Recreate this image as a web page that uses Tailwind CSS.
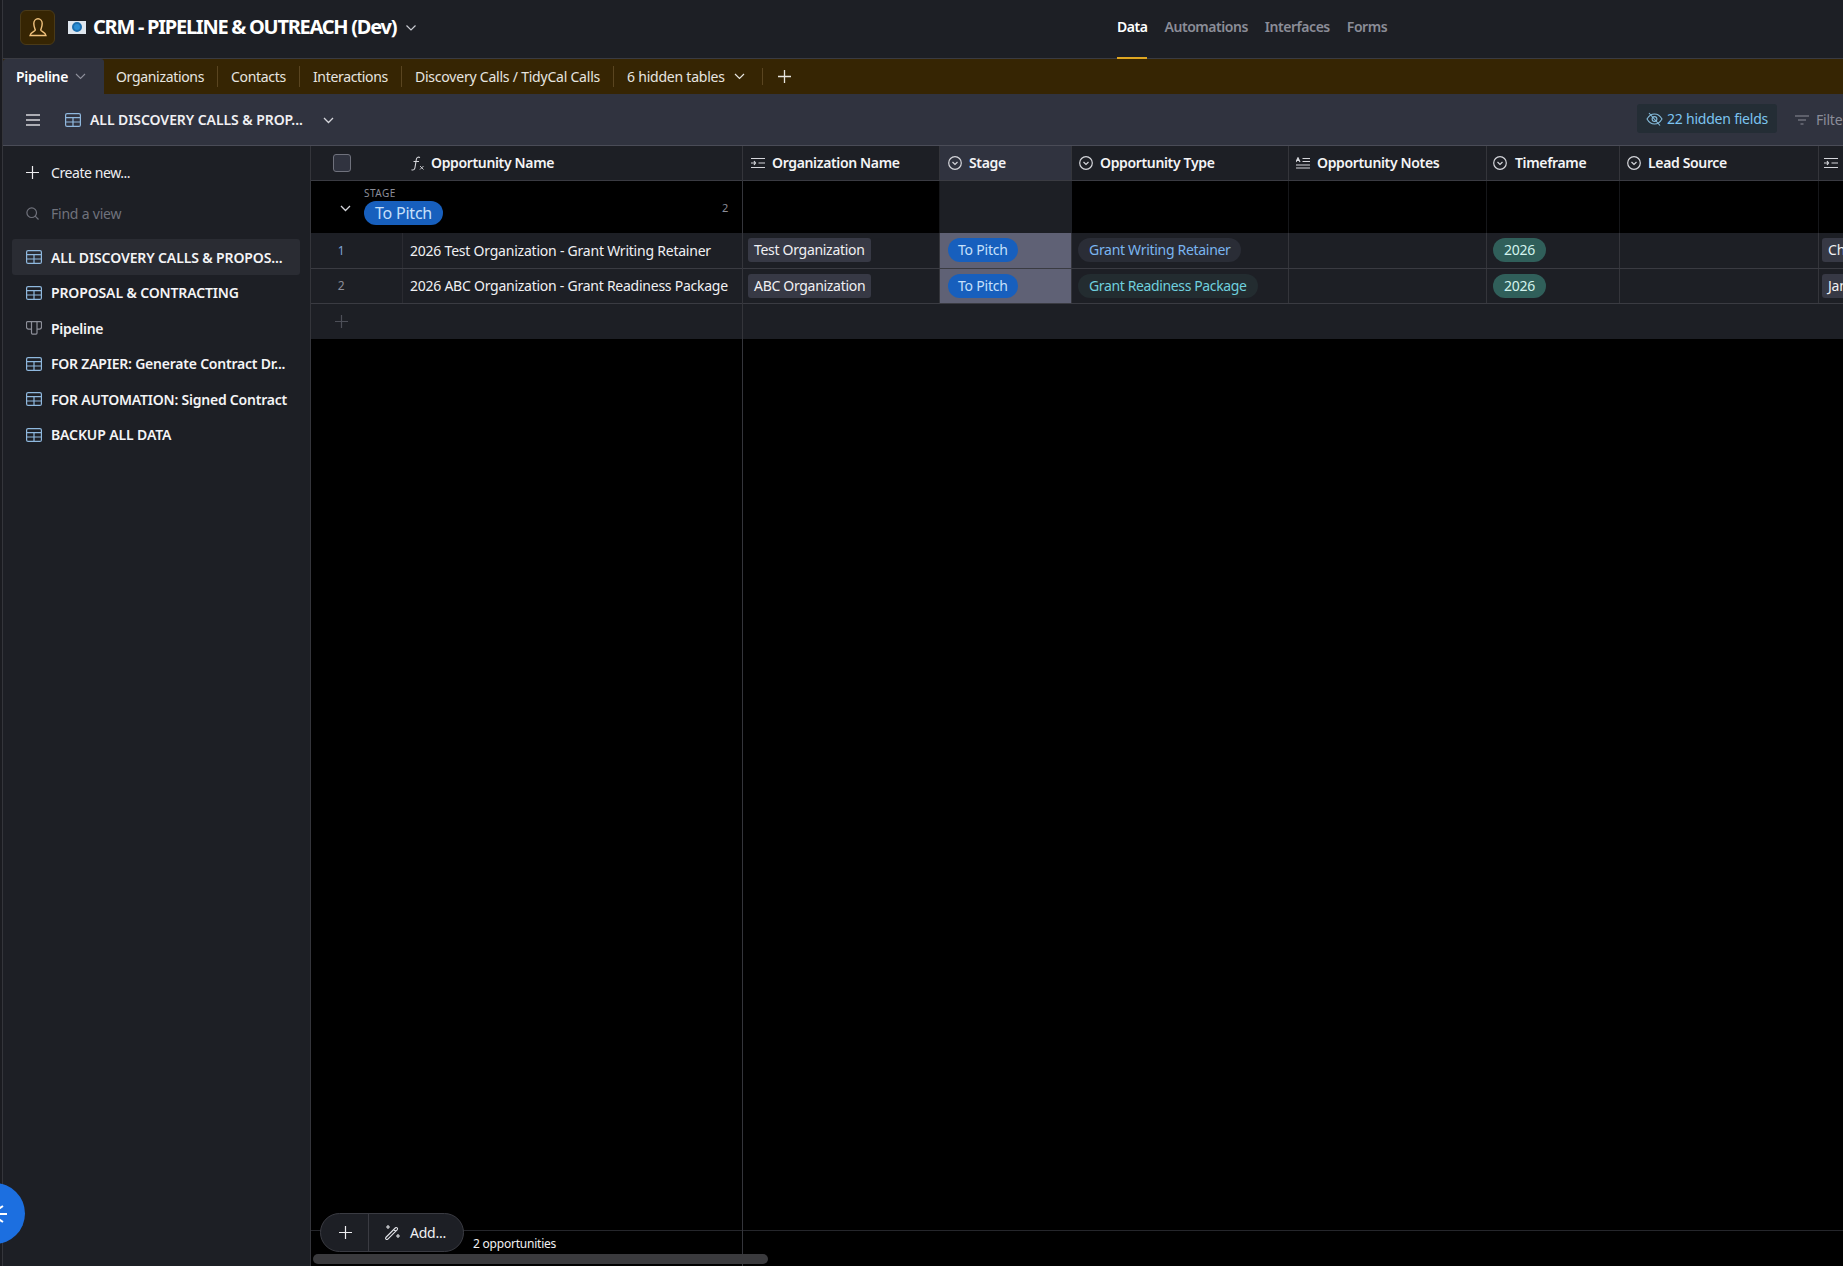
<!DOCTYPE html>
<html><head><meta charset="utf-8"><title>CRM</title>
<script src="https://cdn.jsdelivr.net/npm/@tailwindcss/browser@4"></script></head>
<body class="bg-black">
<div class="relative w-[1843px] h-[1266px] overflow-hidden flex flex-col bg-black text-white font-['Noto_Sans',sans-serif] text-[14px] tracking-[-0.22px]">

<!-- top bar -->
<header class="h-[59px] shrink-0 bg-[#1d1f25] border-b border-[#3a3b42] pl-[3px] flex items-center relative">
  <div class="ml-[17px] w-[35px] h-[35px] rounded-[6px] bg-[#362503] border border-[#4a3a18] flex items-center justify-center -mt-[3px]">
    <svg width="20" height="22" viewBox="0 0 20 22" fill="none" stroke="#f1c27d" stroke-width="1.4"><path d="M5.800 6.500a4.200 4.800 0 0 1 8.400 0c0 3-1.200 5-1.500 6.500 0 1.500 5 2.200 5.300 5.500H2c.3-3.300 5.300-4 5.300-5.500C7 11.500 5.800 9.500 5.800 6.500z"/></svg>
  </div>
  <div class="ml-[13px] w-[18px] h-[13px] bg-[#dfe6ee] flex items-center justify-center -mt-[4px]"><div class="w-[10px] h-[10px] rounded-full bg-[#2b8fd6] border-2 border-[#1b6fb0]"></div></div>
  <h1 class="ml-[7px] text-[20px] font-bold tracking-[-1.25px] -mt-[4px] whitespace-nowrap">CRM - PIPELINE &amp; OUTREACH (Dev)</h1>
  <svg class="ml-[9px] -mt-[3px]" width="12" height="8" viewBox="0 0 12 8" fill="none" stroke="#c9cbd2" stroke-width="1.2"><path d="M1.500 1.500 6 6l4.500-4.500"/></svg>
  <nav class="absolute left-[1117px] top-0 h-[59px] flex gap-[17px] text-[14px] font-semibold text-[#8b8d98] tracking-[-0.46px]">
    <a class="h-[59px] pt-[16px] border-b-2 border-[#dfa622] text-white">Data</a>
    <a class="pt-[16px]">Automations</a>
    <a class="pt-[16px]">Interfaces</a>
    <a class="pt-[16px]">Forms</a>
  </nav>
</header>

<!-- table tabs -->
<div class="h-[35px] shrink-0 bg-[#362503] flex items-center text-[14px] text-[#e8e6e0] whitespace-nowrap pl-[3px] tracking-[-0.32px]">
  <div class="h-full w-[101px] rounded-t-[3px] bg-[#30333f] flex items-center pl-[13px] font-semibold text-white">Pipeline
    <svg class="ml-[7px]" width="11" height="7" viewBox="0 0 11 7" fill="none" stroke="#8f919c" stroke-width="1.100"><path d="M1 1l4.500 4.500L10 1"/></svg></div>
  <span class="pl-[12px] pr-[13px] border-r border-[#5a4520]">Organizations</span>
  <span class="pl-[13px] pr-[13px] border-r border-[#5a4520]">Contacts</span>
  <span class="pl-[13px] pr-[13px] border-r border-[#5a4520]">Interactions</span>
  <span class="pl-[13px] pr-[13px] border-r border-[#5a4520] tracking-[-0.22px]">Discovery Calls / TidyCal Calls</span>
  <span class="pl-[13px] flex items-center tracking-[-0.22px]">6 hidden tables
    <svg class="ml-[9px]" width="11" height="7" viewBox="0 0 11 7" fill="none" stroke="#e8e6e0" stroke-width="1.200"><path d="M1 1l4.500 4.500L10 1"/></svg></span>
  <span class="ml-[17px] h-[17px] border-r border-[#5a4520]"></span>
  <svg class="ml-[15px]" width="13" height="13" viewBox="0 0 13 13" stroke="#e8e6e0" stroke-width="1.300"><path d="M6.500 0v13M0 6.500h13"/></svg>
</div>

<!-- view bar -->
<div class="h-[52px] shrink-0 bg-[#30333f] border-b border-[#4a4c57] flex items-center pl-[26px] relative whitespace-nowrap">
  <svg width="14" height="12" viewBox="0 0 14 12" stroke="#d5d6db" stroke-width="1.300"><path d="M0 1h14M0 6h14M0 11h14"/></svg>
  <svg class="ml-[25px]" width="16" height="14" viewBox="0 0 16 14" fill="none" stroke="#8fb8de" stroke-width="1.200"><rect x=".6" y=".6" width="14.800" height="12.800" rx="1.500"/><path d="M.6 4.700h14.800M.6 9h14.800M8 4.700v8.700"/></svg>
  <span class="ml-[9px] -mt-[1px] font-semibold text-[#f0f0f3] tracking-[-0.07px]">ALL DISCOVERY CALLS &amp; PROP...</span>
  <svg class="ml-[20px] mt-[2px]" width="11" height="7" viewBox="0 0 11 7" fill="none" stroke="#d5d6db" stroke-width="1.300"><path d="M1 1l4.500 4.500L10 1"/></svg>
  <div class="absolute left-[1637px] top-[10px] w-[140px] h-[29px] rounded-[3px] bg-[#242d35] flex items-center pl-[9px] text-[#7cc4f0]">
    <svg width="17" height="14" viewBox="0 0 17 14" fill="none" stroke="#86bcdc" stroke-width="1.100"><path d="M1 7c2-3.500 4.500-5 7.500-5s5.500 1.500 7.500 5c-2 3.500-4.500 5-7.500 5S3 10.500 1 7z"/><circle cx="8.500" cy="7" r="2.400"/><path d="M3 1l11 12.500"/></svg>
    <span class="ml-[4px]">22 hidden fields</span>
  </div>
  <div class="absolute left-[1795px] top-[15px] flex items-center text-[#8b8d98]">
    <svg width="14" height="10" viewBox="0 0 14 10" stroke="#8b8d98" stroke-width="1.200"><path d="M0 1h14M3 5h8M5.500 9h3"/></svg>
    <span class="ml-[7px]">Filter</span>
  </div>
</div>

<!-- main -->
<div class="flex-1 min-h-0 flex pl-[3px]">
  <!-- sidebar -->
  <aside class="w-[307px] shrink-0 bg-[#1d1f25] flex flex-col pl-[9px] pr-[10px] text-[14px]">
    <div class="h-[34px] mt-[9px] flex items-center pl-[14px] text-[#eeeef1]">
      <svg width="13" height="13" viewBox="0 0 13 13" stroke="#eeeef1" stroke-width="1.200"><path d="M6.500 0v13M0 6.500h13"/></svg>
      <span class="ml-[12px] tracking-[-0.42px]">Create new...</span>
    </div>
    <div class="h-[34px] mt-[7px] flex items-center pl-[14px] text-[#70727c]">
      <svg width="13" height="13" viewBox="0 0 13 13" fill="none" stroke="#70727c" stroke-width="1.200"><circle cx="5.700" cy="5.700" r="4.800"/><path d="M9.200 9.200l3.300 3.300"/></svg>
      <span class="ml-[12px]">Find a view</span>
    </div>
    <ul class="mt-[9px] font-semibold text-[#f4f4f6] whitespace-nowrap">
      <li class="h-[36px] rounded-[3px] bg-[#2a2c33] flex items-center pl-[14px]">
        <svg width="16" height="14" viewBox="0 0 16 14" fill="none" stroke="#8fb8de" stroke-width="1.200"><rect x=".6" y=".6" width="14.800" height="12.800" rx="1.500"/><path d="M.6 4.700h14.800M.6 9h14.800M8 4.700v8.700"/></svg>
        <span class="ml-[9px] tracking-[-0.12px]">ALL DISCOVERY CALLS &amp; PROPOS...</span></li>
      <li class="h-[35px] flex items-center pl-[14px]">
        <svg width="16" height="14" viewBox="0 0 16 14" fill="none" stroke="#8fb8de" stroke-width="1.200"><rect x=".6" y=".6" width="14.800" height="12.800" rx="1.500"/><path d="M.6 4.700h14.800M.6 9h14.800M8 4.700v8.700"/></svg>
        <span class="ml-[9px] tracking-[-0.14px]">PROPOSAL &amp; CONTRACTING</span></li>
      <li class="h-[36px] flex items-center pl-[14px]">
        <svg width="16" height="14" viewBox="0 0 16 14" fill="none" stroke="#8d8f99" stroke-width="1.200"><path d="M1.500.6h13a1 1 0 0 1 1 1v4.500a2 2 0 0 1-2 2H11v4a1 1 0 0 1-1 1H6.500a1 1 0 0 1-1-1v-4H2.500a2 2 0 0 1-2-2V1.600a1 1 0 0 1 1-1zM5.500.6v7.500M11 .6v7.500"/></svg>
        <span class="ml-[9px] tracking-[-0.3px]">Pipeline</span></li>
      <li class="h-[35px] flex items-center pl-[14px]">
        <svg width="16" height="14" viewBox="0 0 16 14" fill="none" stroke="#8fb8de" stroke-width="1.200"><rect x=".6" y=".6" width="14.800" height="12.800" rx="1.500"/><path d="M.6 4.700h14.800M.6 9h14.800M8 4.700v8.700"/></svg>
        <span class="ml-[9px]">FOR ZAPIER: Generate Contract Dr...</span></li>
      <li class="h-[36px] flex items-center pl-[14px]">
        <svg width="16" height="14" viewBox="0 0 16 14" fill="none" stroke="#8fb8de" stroke-width="1.200"><rect x=".6" y=".6" width="14.800" height="12.800" rx="1.500"/><path d="M.6 4.700h14.800M.6 9h14.800M8 4.700v8.700"/></svg>
        <span class="ml-[9px]">FOR AUTOMATION: Signed Contract</span></li>
      <li class="h-[35px] flex items-center pl-[14px]">
        <svg width="16" height="14" viewBox="0 0 16 14" fill="none" stroke="#8fb8de" stroke-width="1.200"><rect x=".6" y=".6" width="14.800" height="12.800" rx="1.500"/><path d="M.6 4.700h14.800M.6 9h14.800M8 4.700v8.700"/></svg>
        <span class="ml-[9px] tracking-[-0.12px]">BACKUP ALL DATA</span></li>
    </ul>
  </aside>

  <!-- frozen pane -->
  <section class="w-[433px] shrink-0 border-l border-[#34353b] border-r flex flex-col whitespace-nowrap">
    <div class="h-[35px] shrink-0 bg-[#1d1f25] border-b border-[#3a3b42] flex items-center font-semibold">
      <span class="ml-[22px] w-[18px] h-[18px] rounded-[3px] bg-[#30333f] border border-[#6f717c]"></span>
      <svg class="ml-[60px]" width="14" height="15" viewBox="0 0 14 15" fill="none" stroke="#d5d6db" stroke-width="1.100"><path d="M9 1.500c-2-1-3.400 0-3.700 2L4 11.500c-.3 2-1.500 3-3.500 2.300M2.500 5.500h5.500"/><path stroke-width=".9" d="M9 10l3.500 3.500M12.500 10 9 13.500"/></svg>
      <span class="ml-[6px] -mt-[1px] text-[#f4f4f6] tracking-[-0.35px]">Opportunity Name</span>
    </div>
    <div class="h-[52px] shrink-0 bg-black relative">
      <svg class="absolute left-[29px] top-[24px]" width="11" height="7" viewBox="0 0 11 7" fill="none" stroke="#d5d6db" stroke-width="1.300"><path d="M1 1l4.500 4.500L10 1"/></svg>
      <span class="absolute left-[53px] top-[5px] text-[10px] tracking-[0.5px] leading-[14px] text-[#8b8d98]">STAGE</span>
      <span class="absolute left-[53px] top-[20px] h-[24px] px-[11px] rounded-full bg-[#175fbd] text-[#c6e0fb] text-[16px] leading-[24px]">To Pitch</span>
      <span class="absolute right-[14px] top-[19px] text-[11px] text-[#8b8d98]">2</span>
    </div>
    <div class="h-[36px] shrink-0 bg-[#1d1f25] border-b border-[#3a3b42] flex items-center">
      <span class="w-[92px] h-full shrink-0 border-r border-[#2a2b31] flex items-center justify-center pr-[31px] text-[12px] text-[#7fa4d8]">1</span>
      <span class="pl-[7px] text-[#f0f0f3]">2026 Test Organization - Grant Writing Retainer</span>
    </div>
    <div class="h-[35px] shrink-0 bg-[#1d1f25] border-b border-[#3a3b42] flex items-center">
      <span class="w-[92px] h-full shrink-0 border-r border-[#2a2b31] flex items-center justify-center pr-[31px] text-[12px] text-[#8b8d98]">2</span>
      <span class="pl-[7px] -mt-[1px] text-[#f0f0f3] tracking-[-0.25px]">2026 ABC Organization - Grant Readiness Package</span>
    </div>
    <div class="h-[35px] shrink-0 bg-[#1d1f25] flex items-center pl-[24px]">
      <svg width="13" height="13" viewBox="0 0 13 13" stroke="#4d4f58" stroke-width="1.200"><path d="M6.500 0v13M0 6.500h13"/></svg>
    </div>
    <div class="flex-1"></div>
    <div class="h-[36px] shrink-0 border-t border-[#25262b] relative">
      <span class="absolute left-[162px] top-[4px] text-[12px] text-[#f0f0f3]">2 opportunities</span>
    </div>
  </section>

  <!-- scrolling pane -->
  <section class="flex-1 min-w-0 overflow-hidden flex flex-col whitespace-nowrap">
    <div class="h-[35px] shrink-0 bg-[#1d1f25] border-b border-[#3a3b42] flex font-semibold text-[#f4f4f6] tracking-[-0.35px]">
      <div class="w-[197px] shrink-0 border-r border-[#34353b] flex items-center pl-[8px]">
        <svg width="14" height="12" viewBox="0 0 14 12" stroke="#d5d6db" stroke-width="1.200" fill="none"><path d="M0 1.500h14M7.500 6h6.500M0 6h4M3 4l1.500 2L3 8M0 10.500h14"/></svg>
        <span class="ml-[7px] -mt-[1px]">Organization Name</span></div>
      <div class="w-[132px] shrink-0 bg-[#30333f] border-r border-[#34353b] flex items-center pl-[8px]">
        <svg width="14" height="14" viewBox="0 0 14 14" fill="none" stroke="#d5d6db" stroke-width="1.200"><circle cx="7" cy="7" r="6.300"/><path d="M4.500 6l2.500 2.500L9.500 6"/></svg>
        <span class="ml-[7px] -mt-[1px]">Stage</span></div>
      <div class="w-[217px] shrink-0 border-r border-[#34353b] flex items-center pl-[7px]">
        <svg width="14" height="14" viewBox="0 0 14 14" fill="none" stroke="#d5d6db" stroke-width="1.200"><circle cx="7" cy="7" r="6.300"/><path d="M4.500 6l2.500 2.500L9.500 6"/></svg>
        <span class="ml-[7px] -mt-[1px]">Opportunity Type</span></div>
      <div class="w-[198px] shrink-0 border-r border-[#34353b] flex items-center pl-[7px]">
        <svg width="14" height="12" viewBox="0 0 14 12" stroke="#d5d6db" stroke-width="1.200" fill="none"><path d="M0 5 2 .8 4 5M.8 3.500h2.400M6.500 1.500H14M6.500 4.500H14M0 8h14M0 11h14"/></svg>
        <span class="ml-[7px] -mt-[1px]">Opportunity Notes</span></div>
      <div class="w-[133px] shrink-0 border-r border-[#34353b] flex items-center pl-[6px]">
        <svg width="14" height="14" viewBox="0 0 14 14" fill="none" stroke="#d5d6db" stroke-width="1.200"><circle cx="7" cy="7" r="6.300"/><path d="M4.500 6l2.500 2.500L9.500 6"/></svg>
        <span class="ml-[8px] -mt-[1px]">Timeframe</span></div>
      <div class="w-[199px] shrink-0 border-r border-[#34353b] flex items-center pl-[7px]">
        <svg width="14" height="14" viewBox="0 0 14 14" fill="none" stroke="#d5d6db" stroke-width="1.200"><circle cx="7" cy="7" r="6.300"/><path d="M4.500 6l2.500 2.500L9.500 6"/></svg>
        <span class="ml-[7px] -mt-[1px]">Lead Source</span></div>
      <div class="flex-1 flex items-center pl-[5px]">
        <svg width="14" height="12" viewBox="0 0 14 12" stroke="#d5d6db" stroke-width="1.200" fill="none"><path d="M0 1.500h14M7.500 6h6.500M0 6h4M3 4l1.500 2L3 8M0 10.500h14"/></svg></div>
    </div>
    <div class="h-[52px] shrink-0 bg-black flex">
      <div class="w-[197px] shrink-0 border-r border-[#16171a]"></div>
      <div class="w-[132px] shrink-0 bg-[#1d1f25]"></div>
      <div class="w-[217px] shrink-0 border-r border-[#16171a]"></div>
      <div class="w-[198px] shrink-0 border-r border-[#16171a]"></div>
      <div class="w-[133px] shrink-0 border-r border-[#16171a]"></div>
      <div class="w-[199px] shrink-0 border-r border-[#16171a]"></div>
    </div>
    <div class="h-[36px] shrink-0 bg-[#1d1f25] border-b border-[#3a3b42] flex text-[14px]">
      <div class="w-[197px] shrink-0 border-r border-[#34353b] flex items-center pl-[5px]"><span class="h-[24px] -mt-[1px] px-[6px] rounded-[3px] bg-[#373945] text-[#f0f0f3] leading-[23px] tracking-[-0.3px]">Test Organization</span></div>
      <div class="w-[132px] shrink-0 bg-[#5f6175] border-r border-[#34353b] flex items-center pl-[8px]"><span class="h-[24px] px-[10px] -mt-[1px] rounded-full bg-[#175fbd] text-[#c6e0fb] leading-[23px]">To Pitch</span></div>
      <div class="w-[217px] shrink-0 border-r border-[#34353b] flex items-center pl-[6px]"><span class="h-[24px] pl-[11px] pr-[10px] -mt-[1px] rounded-full bg-[#2a2d36] text-[#7ab5f0] leading-[23px] tracking-[-0.3px]">Grant Writing Retainer</span></div>
      <div class="w-[198px] shrink-0 border-r border-[#34353b]"></div>
      <div class="w-[133px] shrink-0 border-r border-[#34353b] flex items-center pl-[6px]"><span class="h-[24px] px-[11px] -mt-[1px] rounded-full bg-[#305f5a] text-[#d3f3ee] leading-[23px]">2026</span></div>
      <div class="w-[199px] shrink-0 border-r border-[#34353b]"></div>
      <div class="flex-1 flex items-center pl-[3px]"><span class="h-[24px] px-[6px] -mt-[1px] rounded-[3px] bg-[#373945] text-[#f0f0f3] leading-[23px]">Chris</span></div>
    </div>
    <div class="h-[35px] shrink-0 bg-[#1d1f25] border-b border-[#3a3b42] flex text-[14px]">
      <div class="w-[197px] shrink-0 border-r border-[#34353b] flex items-center pl-[5px]"><span class="h-[24px] -mt-[1px] px-[6px] rounded-[3px] bg-[#373945] text-[#f0f0f3] leading-[23px] tracking-[-0.3px]">ABC Organization</span></div>
      <div class="w-[132px] shrink-0 bg-[#5f6175] border-r border-[#34353b] flex items-center pl-[8px]"><span class="h-[24px] -mt-[1px] px-[10px] rounded-full bg-[#175fbd] text-[#c6e0fb] leading-[23px]">To Pitch</span></div>
      <div class="w-[217px] shrink-0 border-r border-[#34353b] flex items-center pl-[6px]"><span class="h-[24px] -mt-[1px] pl-[11px] pr-[11px] rounded-full bg-[#232c30] text-[#6fd0de] leading-[23px] tracking-[-0.37px]">Grant Readiness Package</span></div>
      <div class="w-[198px] shrink-0 border-r border-[#34353b]"></div>
      <div class="w-[133px] shrink-0 border-r border-[#34353b] flex items-center pl-[6px]"><span class="h-[24px] -mt-[1px] px-[11px] rounded-full bg-[#305f5a] text-[#d3f3ee] leading-[23px]">2026</span></div>
      <div class="w-[199px] shrink-0 border-r border-[#34353b]"></div>
      <div class="flex-1 flex items-center pl-[3px]"><span class="h-[24px] -mt-[1px] px-[6px] rounded-[3px] bg-[#373945] text-[#f0f0f3] leading-[23px]">Jane</span></div>
    </div>
    <div class="h-[35px] shrink-0 bg-[#1d1f25]"></div>
    <div class="flex-1"></div>
    <div class="h-[36px] shrink-0 border-t border-[#25262b]"></div>
  </section>
</div>

<!-- floating -->
<div class="absolute left-0 top-0 h-full w-[3px] bg-[#1a1b20] border-r border-[#34353b]"></div>
<div class="absolute left-[320px] top-[1213px] h-[39px] w-[144px] rounded-full bg-[#1d1f25] border border-[#3a3b42] flex items-center text-[14px] text-[#f0f0f3]">
  <div class="w-[48px] h-full border-r border-[#3a3b42] flex items-center justify-center pl-[2px]">
    <svg width="13" height="13" viewBox="0 0 13 13" stroke="#eeeef1" stroke-width="1.200"><path d="M6.500 0v13M0 6.500h13"/></svg></div>
  <svg class="ml-[15px]" width="17" height="17" viewBox="0 0 17 17" fill="none" stroke="#e4e5ea" stroke-width="1.100"><path d="M1.800 13.500 11.500 3.800a1.300 1.300 0 0 1 1.800 1.800L3.600 15.300a1.300 1.300 0 0 1-1.800-1.800zM9.800 5.500l1.800 1.800M4 1v4M2 3h4M14 10v4M12 12h4"/></svg>
  <span class="ml-[9px]">Add...</span>
</div>
<div class="absolute left-[-36px] top-[1183px] w-[61px] h-[61px] rounded-full bg-[#1c6fe0] flex items-center justify-end pr-[18px]">
  <svg width="12" height="18" viewBox="0 0 12 18" stroke="#fff" stroke-width="2" fill="none"><path d="M4 9h8M2 5l6-4M2 13l6 4"/></svg>
</div>
<div class="absolute left-[313px] top-[1254px] w-[455px] h-[10px] rounded-full bg-[#3a3a3d]"></div>
</div>
</body></html>
